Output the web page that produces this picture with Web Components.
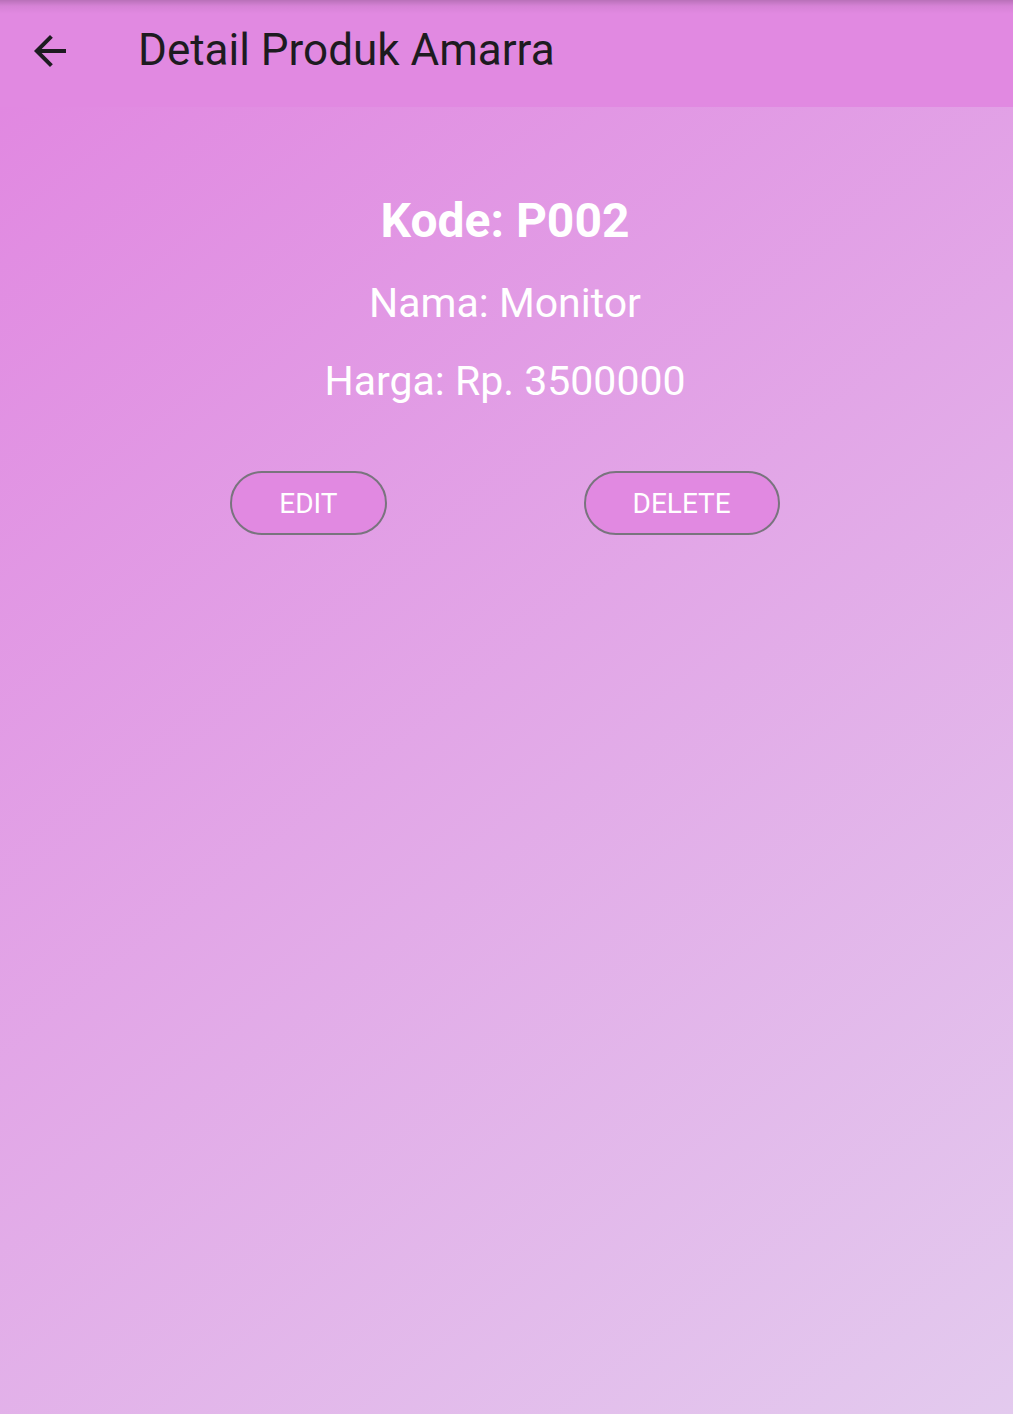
<!DOCTYPE html>
<html lang="id">
<head>
<meta charset="utf-8">
<meta name="viewport" content="width=device-width, initial-scale=1">
<title>Detail Produk Amarra</title>
<style>
  body { margin: 0; font-family: Roboto, "Liberation Sans", sans-serif; }
</style>
</head>
<body>
<product-page>
  <app-bar slot="bar">Detail Produk Amarra</app-bar>
  <product-detail>
    <span slot="code">Kode: P002</span>
    <span slot="name">Nama: Monitor</span>
    <span slot="price">Harga: Rp. 3500000</span>
    <pill-button slot="actions">EDIT</pill-button>
    <pill-button slot="actions">DELETE</pill-button>
  </product-detail>
</product-page>
<script>
  function define(name, html) {
    const template = document.createElement('template');
    template.innerHTML = html;
    customElements.define(name, class extends HTMLElement {
      constructor() {
        super();
        this.attachShadow({ mode: 'open' }).append(template.content.cloneNode(true));
      }
    });
  }

  define('product-page', `
    <style>
      :host { display: flex; flex-direction: column; min-height: 100vh; --accent: #e189e1; color: #1d1b20; }
      main { flex: 1; background: linear-gradient(142deg, #e188e1, #e3caee); }
    </style>
    <slot name="bar"></slot>
    <main><slot></slot></main>`);

  define('app-bar', `
    <style>
      :host { display: block; }
      header {
        display: flex; align-items: center; gap: 64px; padding: 24px 26px 29px;
        background: linear-gradient(rgba(0, 0, 0, .18), rgba(0, 0, 0, .05) 6px, transparent 14px), var(--accent);
      }
      button { display: flex; padding: 0; border: 0; background: none; color: inherit; cursor: pointer; }
      svg { width: 48px; height: 48px; fill: currentColor; }
      h1 { margin: 0; padding-bottom: 2px; font-size: 44px; line-height: 52px; font-weight: 400; }
    </style>
    <header>
      <button type="button" aria-label="Kembali">
        <svg viewBox="0 0 24 24" aria-hidden="true"><path d="M20 11H7.83l5.59-5.59L12 4l-8 8 8 8 1.41-1.41L7.83 13H20v-2z"/></svg>
      </button>
      <h1><slot></slot></h1>
    </header>`);

  define('product-detail', `
    <style>
      :host { display: block; padding: 81px 27px 81px 24px; color: #fff; text-align: center; }
      .info { display: flex; flex-direction: column; gap: 20px; }
      h2, p { margin: 0; }
      h2 { font-size: 48px; line-height: 66px; font-weight: 700; }
      p { font-size: 41px; line-height: 58px; }
      .actions { display: flex; flex-wrap: wrap; justify-content: center; gap: 24px 197px; margin-top: 61px; }
    </style>
    <div class="info">
      <h2><slot name="code"></slot></h2>
      <p><slot name="name"></slot></p>
      <p><slot name="price"></slot></p>
    </div>
    <div class="actions"><slot name="actions"></slot></div>`);

  define('pill-button', `
    <style>
      :host { display: block; }
      button {
        box-sizing: border-box; height: 64px; padding: 2px 47px 0; border: 2px solid #79747e; border-radius: 32px;
        background: var(--accent); color: #fff; font: 400 28px/40px Roboto, "Liberation Sans", sans-serif; cursor: pointer;
      }
    </style>
    <button type="button"><slot></slot></button>`);
</script>
</body>
</html>
